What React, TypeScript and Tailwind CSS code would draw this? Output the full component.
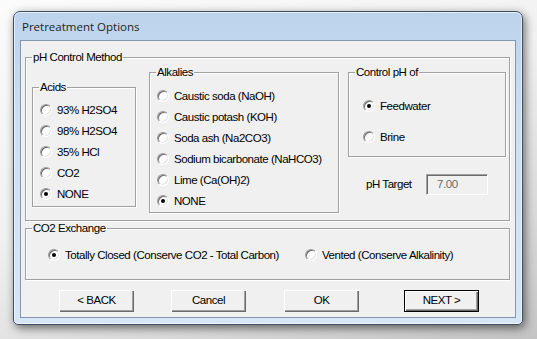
import React from "react";

const ui = { fontFamily: '"Liberation Sans", Arial, sans-serif' };

function Radio({ label, checked = false }: { label: string; checked?: boolean }) {
  return (
    <div className="flex h-[21px] items-center">
      <span className="flex h-[12px] w-[12px] shrink-0 items-center justify-center rounded-full border border-t-[#9a9a9a] border-l-[#9a9a9a] border-b-[#ffffff] border-r-[#ffffff] bg-white shadow-[inset_1px_1px_0_#6b6b6b,inset_-1px_-1px_0_#e3e3e3]">
        {checked && <span className="h-[4px] w-[4px] rounded-full bg-black" />}
      </span>
      <span className="ml-[5px] whitespace-nowrap text-[11.5px] leading-[14px] tracking-[-0.45px] text-black">{label}</span>
    </div>
  );
}

function Group({
  title,
  className,
  children,
}: {
  title: string;
  className: string;
  children: React.ReactNode;
}) {
  return (
    <fieldset
      className={
        "border border-[#a0a0a0] shadow-[inset_1px_1px_0_#ffffff,1px_1px_0_#ffffff] " + className
      }
    >
      <legend className="ml-[6px] px-[1px] text-[11.5px] leading-[14px] tracking-[-0.45px] text-black">
        {title}
      </legend>
      {children}
    </fieldset>
  );
}

function Button({ label, isDefault = false, className }: { label: string; isDefault?: boolean; className: string }) {
  return (
    <div
      className={
        "h-[22px] w-[75px] " +
        (isDefault ? "border border-black " : "") +
        className
      }
    >
      <div className="flex h-full w-full items-center justify-center bg-[#f0f0f0] text-[11.5px] tracking-[-0.45px] text-black shadow-[inset_1px_1px_0_#ffffff,inset_-1px_-1px_0_#696969,inset_-2px_-2px_0_#a0a0a0]">
        {label}
      </div>
    </div>
  );
}

export default function App() {
  return (
    <div
      className="h-[339px] w-[537px] overflow-hidden bg-[linear-gradient(160deg,#fbfbfb_0%,#f1f1f1_45%,#d6d6d6_80%,#c4c4c4_100%)] pl-[13px] pt-[11px]"
      style={ui}
    >
      <div className="h-[314px] w-[510px] rounded-b-[5px] rounded-t-[7px] border border-[#3f4e61] bg-[linear-gradient(to_bottom,#bcd3ec_0%,#cfe0f3_40%,#d7e6f6_100%)] px-[6px] pb-[6px] shadow-[2px_3px_10px_rgba(0,0,0,0.55),inset_0_0_0_1px_rgba(255,255,255,0.6)]">
        <div className="flex h-[28px] items-center pl-[2px] pt-[1px]">
          <span
            className="text-[11.5px] text-[#1e1e1e]"
            style={{ fontFamily: '"Open Sans", "Noto Sans", sans-serif' }}
          >
            Pretreatment Options
          </span>
        </div>
        <div className="h-[278px] w-[496px] border border-[#8496ad] bg-[#f0f0f0]">
          <Group title="pH Control Method" className="ml-[4px] mt-[9px] h-[171px] w-[485px]">
            <div className="flex items-start pl-[6px]">
              <Group title="Acids" className="mt-[16px] h-[127px] w-[104px]">
                <div className="pl-[7px] pt-[5px]">
                  <Radio label="93% H2SO4" />
                  <Radio label="98% H2SO4" />
                  <Radio label="35% HCl" />
                  <Radio label="CO2" />
                  <Radio label="NONE" checked />
                </div>
              </Group>
              <Group title="Alkalies" className="ml-[13px] mt-[1px] h-[148px] w-[190px]">
                <div className="pl-[7px] pt-[6px]">
                  <Radio label="Caustic soda (NaOH)" />
                  <Radio label="Caustic potash (KOH)" />
                  <Radio label="Soda ash (Na2CO3)" />
                  <Radio label="Sodium bicarbonate (NaHCO3)" />
                  <Radio label="Lime (Ca(OH)2)" />
                  <Radio label="NONE" checked />
                </div>
              </Group>
              <div className="ml-[9px] mt-[1px] flex flex-col">
                <Group title="Control pH of" className="h-[92px] w-[158px]">
                  <div className="flex flex-col gap-[10px] pl-[14px] pt-[16px]">
                    <Radio label="Feedwater" checked />
                    <Radio label="Brine" />
                  </div>
                </Group>
                <div className="mt-[17px] flex items-center pl-[18px]">
                  <span className="w-[46px] whitespace-nowrap text-[11.5px] tracking-[-0.45px] text-black">pH Target</span>
                  <div className="ml-[14px] flex h-[21px] w-[62px] items-center border border-t-[#a0a0a0] border-l-[#a0a0a0] border-b-[#ffffff] border-r-[#ffffff] bg-[#f0f0f0] pl-[10px] text-[11.5px] tracking-[-0.45px] text-[#6d6d6d] shadow-[inset_1px_1px_0_#696969]">
                    7.00
                  </div>
                </div>
              </div>
            </div>
          </Group>
          <Group title="CO2 Exchange" className="ml-[4px] h-[59px] w-[485px]">
            <div className="flex items-center pl-[22px] pt-[9px]">
              <Radio label="Totally Closed (Conserve CO2 - Total Carbon)" checked />
              <div className="ml-[26px]">
                <Radio label="Vented (Conserve Alkalinity)" />
              </div>
            </div>
          </Group>
          <div className="mt-[10px] flex">
            <Button label="< BACK" className="ml-[38px]" />
            <Button label="Cancel" className="ml-[37px]" />
            <Button label="OK" className="ml-[38px]" />
            <Button label="NEXT >" isDefault className="ml-[45px]" />
          </div>
        </div>
      </div>
    </div>
  );
}
